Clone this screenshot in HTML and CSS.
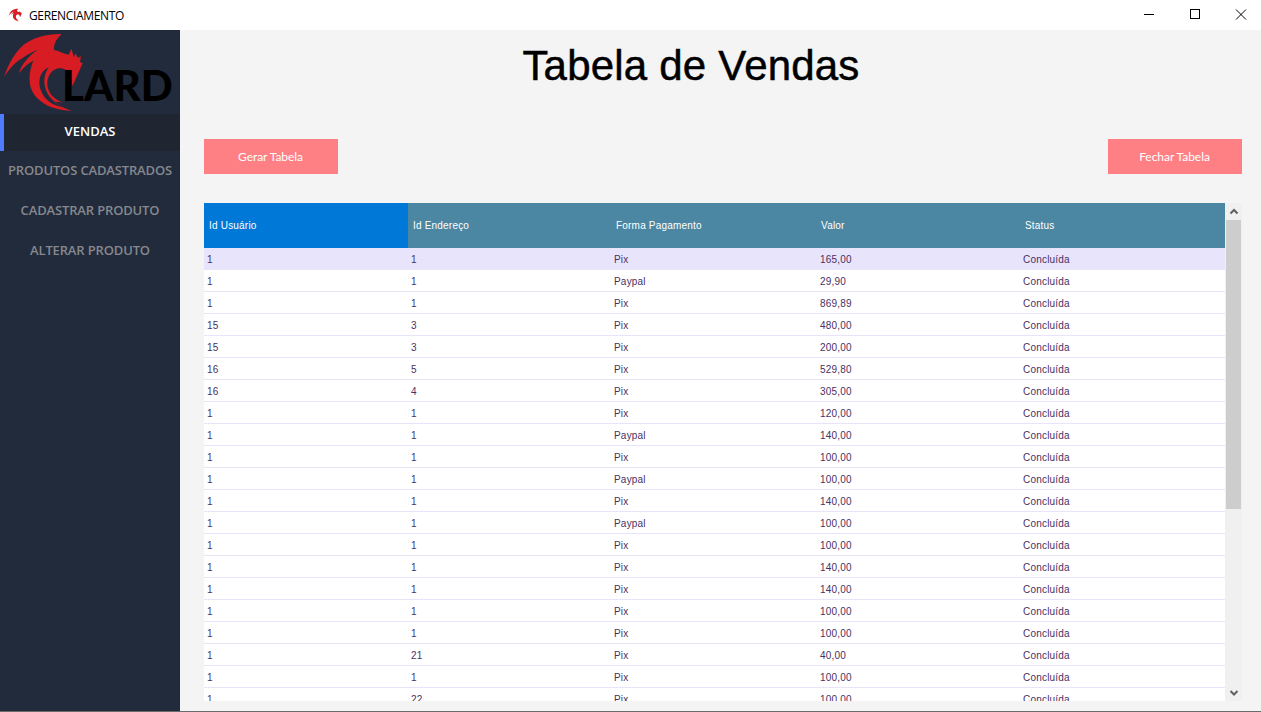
FILE: index.html
```html
<!DOCTYPE html>
<html lang="pt-BR">
<head>
<meta charset="utf-8">
<title>GERENCIAMENTO</title>
<link rel="stylesheet" href="styles.css">
</head>
<body>
<div class="window">
  <header class="titlebar">
    <div class="app-title">
      <svg class="app-icon" viewBox="0 0 270 252" width="15" height="14"><path fill="#d81c23" d="M185 12C150 10 100 20 70 45 45 68 25 100 12 142 25 120 42 100 62 88 85 72 100 65 115 58 90 75 65 100 57 130 70 112 85 100 100 92 90 115 85 145 92 172 102 205 140 240 215 243 195 236 175 226 165 214 175 218 182 218 190 218 170 212 145 195 142 165 140 135 160 112 185 115 200 118 212 130 212 148L218 168C225 150 232 135 238 122L248 100 240 96 243 78 234 84 226 70 222 82 214 56 206 74 190 70 172 62 162 60C160 45 168 28 185 12z"/></svg>
      <span>GERENCIAMENTO</span>
    </div>
    <div class="win-controls">
      <svg viewBox="0 0 46 30" width="46" height="30"><path d="M21 14.500h10" stroke="#000" stroke-width="1" fill="none"/></svg>
      <svg viewBox="0 0 46 30" width="46" height="30"><rect x="21.500" y="9.500" width="9" height="9" stroke="#000" fill="none"/></svg>
      <svg viewBox="0 0 46 30" width="46" height="30"><path d="M21 9.500l10 10M31 9.500l-10 10" stroke="#000" fill="none"/></svg>
    </div>
  </header>
  <div class="app">
    <aside class="sidebar">
      <div class="logo">
        <svg class="dragon" viewBox="0 0 270 252" width="90" height="84"><path fill="#d81c23" d="M185 12C150 10 100 20 70 45 45 68 25 100 12 142 25 120 42 100 62 88 85 72 100 65 115 58 90 75 65 100 57 130 70 112 85 100 100 92 90 115 85 145 92 172 102 205 140 240 215 243 195 236 175 226 165 214 175 218 182 218 190 218 170 212 145 195 142 165 140 135 160 112 185 115 200 118 212 130 212 148L218 168C225 150 232 135 238 122L248 100 240 96 243 78 234 84 226 70 222 82 214 56 206 74 190 70 172 62 162 60C160 45 168 28 185 12z"/><path fill="#212b3b" d="M147 112C122 122 112 150 122 180 132 210 160 228 192 232 165 220 142 200 135 170 130 145 135 128 147 112z"/></svg>
        <span class="logo-text">LARD</span>
      </div>
      <nav class="menu">
        <a class="menu-item active">VENDAS</a>
        <a class="menu-item">PRODUTOS CADASTRADOS</a>
        <a class="menu-item">CADASTRAR PRODUTO</a>
        <a class="menu-item">ALTERAR PRODUTO</a>
      </nav>
    </aside>
    <main class="content">
      <h1 class="page-title">Tabela de Vendas</h1>
      <div class="actions">
        <button class="btn">Gerar Tabela</button>
        <button class="btn">Fechar Tabela</button>
      </div>
      <div class="table-wrap">
        <div class="table-view">
          <div class="thead">
            <div class="th th-active">Id Usuário</div>
            <div class="th">Id Endereço</div>
            <div class="th">Forma Pagamento</div>
            <div class="th">Valor</div>
            <div class="th">Status</div>
          </div>
          <div class="tbody" id="rows"></div>
        </div>
        <div class="scrollbar">
          <svg class="arrow" viewBox="0 0 16 17" width="16" height="17"><path d="M4.500 10.500 8 7l3.500 3.500" stroke="#606060" stroke-width="2" fill="none"/></svg>
          <div class="track"><div class="thumb"></div></div>
          <svg class="arrow" viewBox="0 0 16 17" width="16" height="17"><path d="M4.500 7 8 10.500 11.500 7" stroke="#606060" stroke-width="2" fill="none"/></svg>
        </div>
      </div>
    </main>
  </div>
</div>
<script src="rows.js"></script>
</body>
</html>
```
FILE: rows.js
```js
var data = [
  [1,1,"Pix","165,00"],[1,1,"Paypal","29,90"],[1,1,"Pix","869,89"],[15,3,"Pix","480,00"],
  [15,3,"Pix","200,00"],[16,5,"Pix","529,80"],[16,4,"Pix","305,00"],[1,1,"Pix","120,00"],
  [1,1,"Paypal","140,00"],[1,1,"Pix","100,00"],[1,1,"Paypal","100,00"],[1,1,"Pix","140,00"],
  [1,1,"Paypal","100,00"],[1,1,"Pix","100,00"],[1,1,"Pix","140,00"],[1,1,"Pix","140,00"],
  [1,1,"Pix","100,00"],[1,1,"Pix","100,00"],[1,21,"Pix","40,00"],[1,1,"Pix","100,00"],[1,22,"Pix","100,00"]
];
var box = document.getElementById("rows");
data.forEach(function (r, i) {
  var row = document.createElement("div");
  row.className = i === 0 ? "tr selected" : "tr";
  r.concat("Concluída").forEach(function (v) {
    var c = document.createElement("div");
    c.className = "td";
    c.textContent = v;
    row.appendChild(c);
  });
  box.appendChild(row);
});
```
FILE: styles.css
```css
* { box-sizing: border-box; }
html, body { margin: 0; height: 100%; overflow: hidden; }
.window { display: flex; flex-direction: column; width: 1261px; height: 712px; background: #f4f4f4; border-bottom: 1px solid #6b6b6b; }
.titlebar { flex: 0 0 30px; display: flex; justify-content: space-between; align-items: center; background: #fff; }
.app-title { display: flex; align-items: center; gap: 6px; padding-left: 8px; font: 12px "Open Sans", sans-serif; letter-spacing: -0.35px; color: #000; }
.app-icon { display: block; }
.win-controls { display: flex; }
.win-controls svg { display: block; }
.app { flex: 1; display: flex; min-height: 0; }
.sidebar { flex: 0 0 180px; background: #212b3b; }
.logo { position: relative; height: 84px; overflow: hidden; }
.dragon { position: absolute; left: 0; top: 0; }
.logo-text { position: absolute; left: 62px; top: 30px; font: 900 42px/50px "Lato", sans-serif; color: #000; }
.menu { display: flex; flex-direction: column; }
.menu-item { display: flex; align-items: center; justify-content: center; height: 40px; padding-bottom: 6px; font: 600 13px "Open Sans", sans-serif; letter-spacing: -0.15px; color: #85888e; white-space: nowrap; }
.menu-item.active { height: 37px; margin-bottom: 1px; background: #1f2632; border-left: 4px solid #4f7cff; padding: 0 4px 4px 0; color: #fff; font-weight: 600; letter-spacing: 0; }
.menu-item:nth-child(2) { margin-top: 1px; }
.content { flex: 1; min-width: 0; display: flex; flex-direction: column; padding: 0 19px 10px 24px; }
.page-title { margin: 11px 0 0; height: 50px; padding-right: 64px; font: 400 42px/50px "Liberation Sans", sans-serif; letter-spacing: 0.2px; color: #000; text-align: center; -webkit-text-stroke: 0.5px #000; }
.actions { display: flex; justify-content: space-between; margin-top: 48px; }
.btn { width: 134px; height: 35px; border: 0; padding: 0 1px 0 0; background: #ff8084; color: #fff; font: 12px "Lato", sans-serif; letter-spacing: -0.05px; }
.table-wrap { display: flex; margin-top: 29px; flex: 1; min-height: 0; }
.table-view { flex: 0 0 1021px; display: flex; flex-direction: column; overflow: hidden; background: #fff; }
.thead { flex: 0 0 45px; display: grid; grid-template-columns: 204px 203px 205px 204px 205px; background: #4b87a3; }
.th { display: flex; align-items: center; padding-left: 5px; font: 10px "Liberation Sans", sans-serif; letter-spacing: 0.2px; color: #fff; }
.th-active { background: #0078d7; }
.tbody { flex: 1; overflow: hidden; }
.tr { display: grid; grid-template-columns: 204px 203px 206px 203px 205px; height: 22px; border-bottom: 1px solid #e8e4fc; background: #fff; }
.tr.selected { background: #e8e4fc; }
.td { padding-left: 3px; font: 10px/23px "Liberation Sans", sans-serif; letter-spacing: 0.2px; color: #4a2f63; }
.scrollbar { flex: 0 0 17px; display: flex; flex-direction: column; background: #f0f0f0; padding-left: 1px; }
.arrow { display: block; flex: 0 0 17px; }
.track { flex: 1; }
.thumb { width: 15px; height: 289px; background: #cdcdcd; }
```
